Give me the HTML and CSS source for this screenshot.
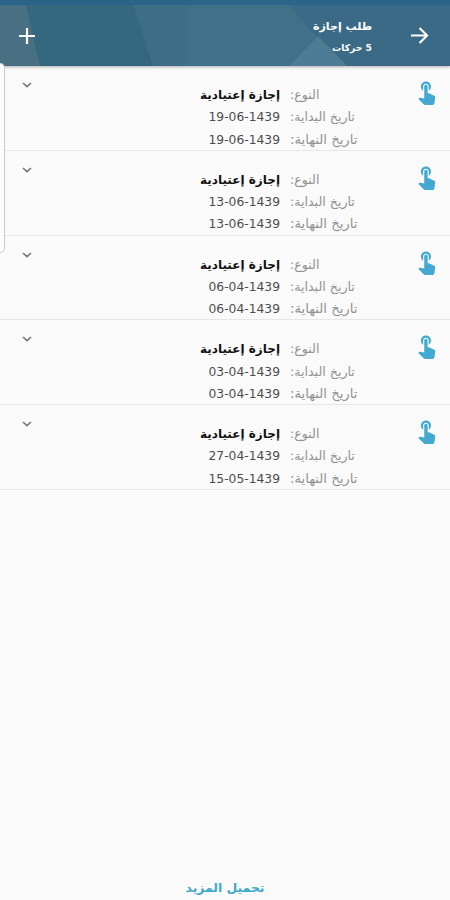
FILE: index.html
```html
<!DOCTYPE html>
<html lang="ar" dir="rtl">
  <head>
    <meta charset="UTF-8" />
    <meta name="viewport" content="width=device-width, initial-scale=1.0" />
    <title>طلب إجازة</title>
    <link rel="stylesheet" href="styles.css">
  </head>
  <body>
    <svg class="symbols" width="0" height="0">
      <symbol id="touch" viewBox="0 0 24 24">
        <path d="M9 11.24V7.5C9 6.12 10.12 5 11.5 5S14 6.12 14 7.5v3.74c1.21-.81 2-2.18 2-3.74C16 5.01 13.99 3 11.5 3S7 5.01 7 7.5c0 1.56.79 2.93 2 3.74zm9.84 4.63l-4.54-2.26c-.17-.07-.35-.11-.54-.11H13v-6c0-.83-.67-1.5-1.5-1.5S10 6.67 10 7.5v10.74l-3.43-.72c-.08-.01-.15-.03-.24-.03-.31 0-.59.13-.79.33l-.79.8 4.94 4.94c.27.27.65.44 1.06.44h6.79c.75 0 1.33-.55 1.44-1.28l.75-5.27c.01-.07.02-.14.02-.2 0-.62-.38-1.16-.91-1.38z" />
      </symbol>
      <symbol id="chevron" viewBox="0 0 10 6">
        <path d="M1 1l4 3.6L9 1" fill="none" stroke="currentColor" stroke-width="1.6" />
      </symbol>
    </svg>
    <header class="header">
      <svg class="header-bg" viewBox="0 0 450 66" preserveAspectRatio="none">
        <polygon points="0,0 25,0 40,66 0,66" fill="#496f83" />
        <polygon points="25,0 132,0 153,66 40,66" fill="#34687e" />
        <polygon points="132,0 188,0 188,66 153,66" fill="#3d6e85" />
        <polygon points="188,0 284,0 318,38 290,66 188,66" fill="#3f7189" />
        <polygon points="318,36 347,66 289,66" fill="#4c7d95" />
        <rect width="450" height="5" fill="#2b6488" />
      </svg>
      <svg class="back" viewBox="0 0 20 20">
        <path d="M1 10h17M10 2l8 8-8 8" />
      </svg>
      <div class="titles">
        <h1>طلب إجازة</h1>
        <p>5 حركات</p>
      </div>
      <svg class="add" viewBox="0 0 16 16">
        <path d="M8 0v16M0 8h16" />
      </svg>
    </header>
    <div class="drawer"></div>
    <main class="list">
      <div class="item">
        <svg class="touch"><use href="#touch" /></svg>
        <dl>
          <dt>النوع:</dt><dd class="name">إجازة إعتيادية</dd>
          <dt>تاريخ البداية:</dt><dd dir="ltr">19-06-1439</dd>
          <dt class="end">تاريخ النهاية:</dt><dd dir="ltr">19-06-1439</dd>
        </dl>
        <svg class="chevron"><use href="#chevron" /></svg>
      </div>
      <div class="item">
        <svg class="touch"><use href="#touch" /></svg>
        <dl>
          <dt>النوع:</dt><dd class="name">إجازة إعتيادية</dd>
          <dt>تاريخ البداية:</dt><dd dir="ltr">13-06-1439</dd>
          <dt class="end">تاريخ النهاية:</dt><dd dir="ltr">13-06-1439</dd>
        </dl>
        <svg class="chevron"><use href="#chevron" /></svg>
      </div>
      <div class="item">
        <svg class="touch"><use href="#touch" /></svg>
        <dl>
          <dt>النوع:</dt><dd class="name">إجازة إعتيادية</dd>
          <dt>تاريخ البداية:</dt><dd dir="ltr">06-04-1439</dd>
          <dt class="end">تاريخ النهاية:</dt><dd dir="ltr">06-04-1439</dd>
        </dl>
        <svg class="chevron"><use href="#chevron" /></svg>
      </div>
      <div class="item">
        <svg class="touch"><use href="#touch" /></svg>
        <dl>
          <dt>النوع:</dt><dd class="name">إجازة إعتيادية</dd>
          <dt>تاريخ البداية:</dt><dd dir="ltr">03-04-1439</dd>
          <dt class="end">تاريخ النهاية:</dt><dd dir="ltr">03-04-1439</dd>
        </dl>
        <svg class="chevron"><use href="#chevron" /></svg>
      </div>
      <div class="item">
        <svg class="touch"><use href="#touch" /></svg>
        <dl>
          <dt>النوع:</dt><dd class="name">إجازة إعتيادية</dd>
          <dt>تاريخ البداية:</dt><dd dir="ltr">27-04-1439</dd>
          <dt class="end">تاريخ النهاية:</dt><dd dir="ltr">15-05-1439</dd>
        </dl>
        <svg class="chevron"><use href="#chevron" /></svg>
      </div>
    </main>
    <footer class="more">تحميل المزيد</footer>
  </body>
</html>
```
FILE: styles.css
```css
* {
  box-sizing: border-box;
  margin: 0;
  padding: 0;
}
body {
  height: 900px;
  display: flex;
  flex-direction: column;
  background-color: #fafafa;
  font-family: "DejaVu Sans", sans-serif;
}
.symbols {
  position: absolute;
}
.header {
  position: relative;
  height: 66px;
  flex: none;
  display: flex;
  align-items: flex-start;
  padding: 0 21px 0 19px;
  background-color: #3a6a86;
  color: white;
  box-shadow: 0 1px 3px rgba(0, 0, 0, 0.3);
}
.header-bg {
  position: absolute;
  inset: 0;
  width: 100%;
  height: 100%;
}
.back,
.add {
  position: relative;
  fill: none;
  stroke: white;
  stroke-width: 2.2;
}
.back {
  width: 19px;
  height: 19px;
  margin-top: 26px;
}
.titles {
  position: relative;
  flex: 1;
  padding: 17px 38px 0 0;
}
.titles h1 {
  font-size: 11px;
  line-height: 20px;
}
.titles p {
  font-size: 9.2px;
  font-weight: bold;
  line-height: 21px;
}
.add {
  width: 16px;
  height: 16px;
  margin-top: 28px;
}
.drawer {
  position: absolute;
  left: 0;
  top: 63px;
  width: 5px;
  height: 190px;
  border: 1px solid #c8cbcd;
  border-left: none;
  border-radius: 0 5px 5px 0;
  background-color: #fdfdfd;
}
.item {
  display: flex;
  height: 84.75px;
  border-bottom: 1px solid #e6e6e6;
  padding: 0 10px 0 22px;
}
.touch {
  width: 27px;
  height: 27px;
  margin-top: 12px;
  fill: #43a9d0;
}
dl {
  flex: 1;
  display: grid;
  grid-template-columns: 70px auto;
  grid-auto-rows: 22.3px;
  column-gap: 10px;
  padding: 18px 53px 0 0;
  line-height: 22px;
  white-space: nowrap;
}
dt {
  color: #929292;
  font-size: 12.6px;
  text-align: left;
}
.end {
  font-size: 13.2px;
}
dd {
  color: #4c4c4c;
  font-size: 12.3px;
  text-align: right;
}
.name {
  color: #111;
  font-size: 12px;
  font-weight: bold;
}
.chevron {
  width: 10px;
  height: 6px;
  margin-top: 16px;
  color: #777;
}
.more {
  margin-top: auto;
  padding-bottom: 1px;
  text-align: center;
  color: #3fa9c9;
  font-size: 12.4px;
  font-weight: bold;
  line-height: 22px;
}
```
